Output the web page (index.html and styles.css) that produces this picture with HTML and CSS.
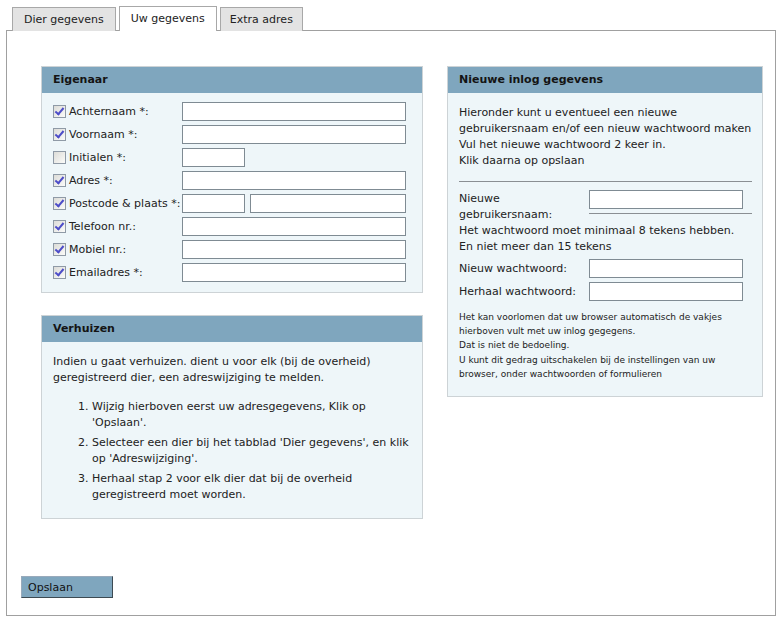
FILE: index.html
```html
<!DOCTYPE html>
<html lang="nl">
<head>
    <meta charset="UTF-8">
    <title>Uw gegevens</title>
    <link rel="stylesheet" href="styles.css">
</head>
<body>
    <ul class="tabs">
        <li class="tab">Dier gegevens</li>
        <li class="tab active">Uw gegevens</li>
        <li class="tab">Extra adres</li>
    </ul>

    <div class="tab-panel">
        <div class="columns">
            <div class="col-left">
                <div class="box">
                    <div class="box-header">Eigenaar</div>
                    <div class="box-body owner-form">
                        <label class="field-label"><input type="checkbox" checked> Achternaam *:</label>
                        <div class="field"><input type="text" class="txt"></div>

                        <label class="field-label"><input type="checkbox" checked> Voornaam *:</label>
                        <div class="field"><input type="text" class="txt"></div>

                        <label class="field-label"><input type="checkbox"> Initialen *:</label>
                        <div class="field"><input type="text" class="txt short"></div>

                        <label class="field-label"><input type="checkbox" checked> Adres *:</label>
                        <div class="field"><input type="text" class="txt"></div>

                        <label class="field-label"><input type="checkbox" checked> Postcode &amp; plaats *:</label>
                        <div class="field split">
                            <input type="text" class="txt short">
                            <input type="text" class="txt city">
                        </div>

                        <label class="field-label"><input type="checkbox" checked> Telefoon nr.:</label>
                        <div class="field"><input type="text" class="txt"></div>

                        <label class="field-label"><input type="checkbox" checked> Mobiel nr.:</label>
                        <div class="field"><input type="text" class="txt"></div>

                        <label class="field-label"><input type="checkbox" checked> Emailadres *:</label>
                        <div class="field"><input type="text" class="txt"></div>
                    </div>
                </div>

                <div class="box move-box">
                    <div class="box-header">Verhuizen</div>
                    <div class="box-body text-body">
                        <p>Indien u gaat verhuizen. dient u voor elk (bij de overheid) geregistreerd dier, een adreswijziging te melden.</p>
                        <ol class="steps">
                            <li>Wijzig hierboven eerst uw adresgegevens, Klik op 'Opslaan'.</li>
                            <li>Selecteer een dier bij het tabblad 'Dier gegevens', en klik op 'Adreswijziging'.</li>
                            <li>Herhaal stap 2 voor elk dier dat bij de overheid geregistreerd moet worden.</li>
                        </ol>
                    </div>
                </div>
            </div>

            <div class="col-right">
                <div class="box">
                    <div class="box-header">Nieuwe inlog gegevens</div>
                    <div class="box-body text-body login-body">
                        <p>Hieronder kunt u eventueel een nieuwe gebruikersnaam en/of een nieuw wachtwoord maken<br>
                        Vul het nieuwe wachtwoord 2 keer in.<br>
                        Klik daarna op opslaan</p>
                        <hr class="sep">
                        <div class="login-row first">
                            <span class="login-label">Nieuwe gebruikersnaam:</span>
                            <div class="login-field">
                                <input type="text" class="txt pw">
                                <hr class="sep short-sep">
                            </div>
                        </div>
                        <p class="pw-rule">Het wachtwoord moet minimaal 8 tekens hebben.<br>En niet meer dan 15 tekens</p>
                        <div class="login-row">
                            <span class="login-label">Nieuw wachtwoord:</span>
                            <input type="password" class="txt pw">
                        </div>
                        <div class="login-row">
                            <span class="login-label">Herhaal wachtwoord:</span>
                            <input type="password" class="txt pw">
                        </div>
                        <p class="note">Het kan voorlomen dat uw browser automatisch de vakjes hierboven vult met uw inlog gegegens.<br>
                        Dat is niet de bedoeling.<br>
                        U kunt dit gedrag uitschakelen bij de instellingen van uw browser, onder wachtwoorden of formulieren</p>
                    </div>
                </div>
            </div>
        </div>

        <button class="save-btn">Opslaan</button>
    </div>
</body>
</html>
```

FILE: styles.css
```css
/* Basis */
body {
    margin: 0;
    padding: 6px 5px 0 6px;
    font-family: "DejaVu Sans", Verdana, sans-serif;
    font-size: 11px;
    color: #222;
    background-color: white;
}

/* Tabbladen */
.tabs {
    list-style: none;
    margin: 0 0 0 6px;
    padding: 0;
    display: flex;
    gap: 3px;
    height: 25px;
    position: relative;
    z-index: 1;
}

.tab {
    height: 24px;
    margin-top: 1px;
    padding: 0 11px;
    line-height: 23px;
    font-size: 11px;
    background-color: #e3e3e3;
    border: 1px solid #a8a8a8;
    border-bottom: none;
    box-sizing: border-box;
}

.tab.active {
    height: 25px;
    margin-top: 0;
    background-color: white;
    padding: 0 11px;
}

.tab:last-child {
    padding: 0 9px;
}

.tab-panel {
    height: 586px;
    margin-top: -1px;
    border: 1px solid #a0a0a0;
    box-sizing: border-box;
    padding: 35px 0 0 14px;
    background-color: white;
}

.columns {
    display: flex;
    align-items: flex-start;
    gap: 24px;
    margin-left: 20px;
}

.col-left {
    width: 382px;
    display: flex;
    flex-direction: column;
    gap: 22px;
}

.col-right {
    width: 316px;
}

/* Kaders */
.box {
    border: 1px solid #cdd3d6;
    background-color: #eef6f9;
}

.box-header {
    height: 26px;
    line-height: 26px;
    padding-left: 11px;
    background-color: #7fa6be;
    font-weight: bold;
    font-size: 11px;
    color: #141414;
}

.box-body {
    padding: 10px 10px 10px 11px;
}

/* Eigenaar formulier */
.owner-form {
    display: grid;
    grid-template-columns: 129px 1fr;
    grid-auto-rows: 19px;
    row-gap: 4px;
    padding-top: 9px;
    padding-bottom: 10px;
}

.field-label {
    display: flex;
    align-items: center;
    white-space: nowrap;
    font-size: 11px;
}

.field {
    display: flex;
    gap: 5px;
}

.txt {
    height: 19px;
    box-sizing: border-box;
    border: 1px solid #7f8b93;
    background-color: white;
    margin: 0;
    padding: 0 2px;
    width: 224px;
}

.txt.short { width: 63px; }
.txt.city { width: 156px; }

input[type="checkbox"] {
    appearance: none;
    width: 13px;
    height: 13px;
    margin: 0 3px 0 0;
    border: 1px solid #8f9aa6;
    background: linear-gradient(135deg, #dcdcd8, #fbfbf9);
    position: relative;
    flex-shrink: 0;
}

input[type="checkbox"]:checked::after {
    content: "";
    position: absolute;
    left: 3px;
    top: 0px;
    width: 3px;
    height: 7px;
    border: solid #4d4dc8;
    border-width: 0 2px 2px 0;
    transform: rotate(40deg);
}

/* Tekstkaders */
.text-body {
    line-height: 16px;
    padding-top: 12px;
}

.text-body p {
    margin: 0;
}

.move-box .text-body {
    padding-bottom: 16px;
}

.steps {
    margin: 13px 0 0 0;
    padding-left: 39px;
    line-height: 15.5px;
}

.steps li {
    margin-bottom: 5px;
}

.steps li:last-child {
    margin-bottom: 0;
}

/* Inlog gegevens */
.login-body {
    padding-bottom: 15px;
}

.sep {
    border: none;
    border-top: 1px solid #8a8f93;
    margin: 12px 0 8px 0;
}

.login-row {
    display: flex;
    align-items: center;
    margin-top: 4px;
}

.login-row.first {
    align-items: flex-start;
    margin-top: 0;
}

.login-row.first .login-label {
    padding-top: 1px;
}

.login-label {
    width: 130px;
    flex-shrink: 0;
}

.login-field {
    flex-grow: 1;
}

.txt.pw {
    width: 154px;
}

.short-sep {
    margin: 4px 0 0 0;
}

.pw-rule {
    margin-top: 0;
}

.note {
    font-size: 9px;
    line-height: 14.2px;
    margin-top: 9px !important;
}

/* Opslaan knop */
.save-btn {
    margin-top: 57px;
    margin-left: 0;
    width: 92px;
    height: 22px;
    padding: 0 0 0 6px;
    text-align: left;
    font-family: "DejaVu Sans", Verdana, sans-serif;
    font-size: 11px;
    color: #111;
    background-color: #7fa6be;
    border: 1px solid #3d4a52;
    border-top-color: #9ab;
    border-left-color: #9ab;
}
```
